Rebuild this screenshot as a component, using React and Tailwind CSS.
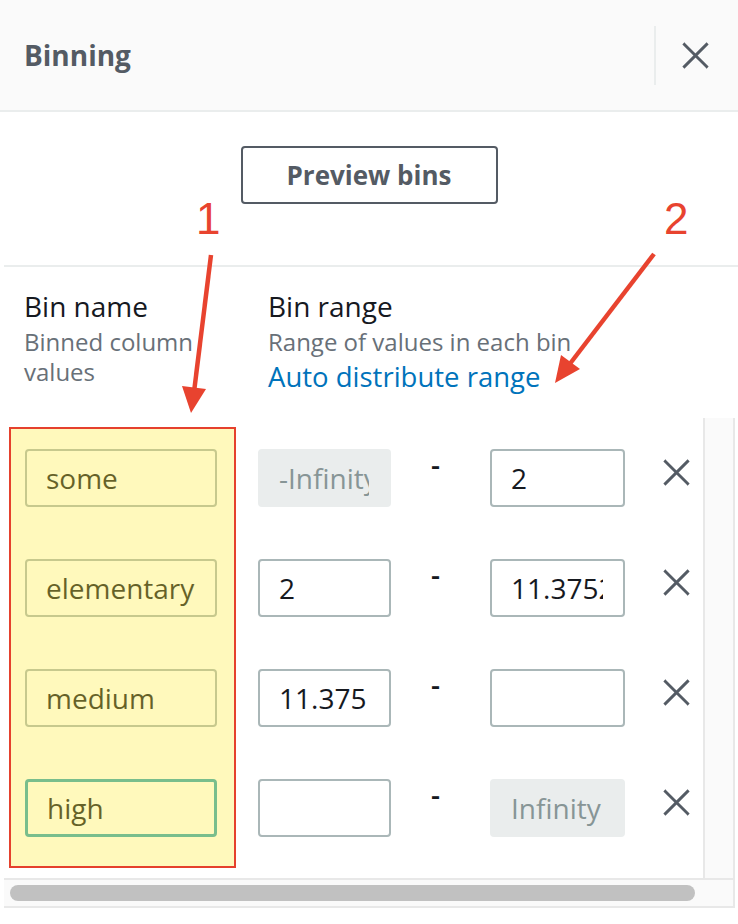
import React from "react";

const rows = [
  { name: "some", from: "-Infinity", fromLocked: true, to: "2" },
  { name: "elementary", from: "2", to: "11.3752" },
  { name: "medium", from: "11.375", to: "" },
  { name: "high", from: "", to: "Infinity", toLocked: true, focused: true },
];

function CloseIcon({ className = "" }) {
  return (
    <svg viewBox="0 0 28 28" className={className} fill="none">
      <path d="M2.5 2.5 L25.5 25.5 M25.5 2.5 L2.5 25.5" stroke="#545b64" strokeWidth="3" strokeLinecap="square" />
    </svg>
  );
}

function Field({ value, locked, focused, width }) {
  const base = "h-[58px] rounded-[4px] pl-[19px] pr-[20px] text-[28px] outline-none font-['Open_Sans',sans-serif]";
  if (locked) {
    return (
      <input
        readOnly
        value={value}
        className={`${base} ${width} border-2 border-[#eaeded] bg-[#eaeded] text-[#879596]`}
      />
    );
  }
  return (
    <input
      readOnly
      value={value}
      className={`${base} ${width} bg-white text-[#16191f] ${
        focused ? "border-[3px] border-[#35a6b6] pl-[18px]" : "border-2 border-[#aab7b8]"
      }`}
    />
  );
}

export default function App() {
  return (
    <div className="relative w-[738px] h-[924px] overflow-hidden bg-white font-['Open_Sans',sans-serif]">
      {/* Header */}
      <div className="flex items-center h-[112px] pl-[24px] pr-[29px] bg-[#fafafa] border-b-2 border-[#eaeded]">
        <h2 className="flex-1 text-[28px] font-bold text-[#545b64]">Binning</h2>
        <div className="w-[2px] h-[59px] bg-[#eaeded]" />
        <button className="ml-[26px]">
          <CloseIcon className="w-[27px] h-[27px]" />
        </button>
      </div>

      {/* Preview */}
      <div className="flex justify-center mt-[34px]">
        <button className="w-[257px] h-[58px] border-2 border-[#545b64] rounded-[4px] text-[26px] font-bold text-[#545b64]">
          Preview bins
        </button>
      </div>

      <div className="ml-1 mt-[61px] h-[2px] bg-[#eaeded]" />

      {/* Column labels */}
      <div className="flex pt-[18px] pl-[24px]">
        <div className="w-[244px]">
          <div className="text-[28px] leading-[42px] text-[#16191f]">Bin name</div>
          <div className="text-[24px] leading-[30px] text-[#687078] w-[170px]">Binned column values</div>
        </div>
        <div>
          <div className="text-[28px] leading-[42px] text-[#16191f]">Bin range</div>
          <div className="text-[24px] leading-[30px] text-[#687078]">Range of values in each bin</div>
          <a className="block text-[27.5px] leading-[40px] text-[#0073bb]">Auto distribute range</a>
        </div>
      </div>

      {/* Table with scrollbars */}
      <div className="ml-1 mt-[21px] w-[731px]">
        <div className="flex h-[460px]">
          <div className="relative flex-1 bg-white border-r-2 border-[#e8e8e8]">
            <div className="flex flex-col gap-[52px] pt-[31px] pl-[21px]">
              {rows.map((r) => (
                <div key={r.name} className="flex">
                  <Field value={r.name} focused={r.focused} width="w-[192px]" />
                  <div className="ml-[41px]">
                    <Field value={r.from} locked={r.fromLocked} width="w-[133px]" />
                  </div>
                  <span className="w-[99px] self-start mt-[1px] pl-[40px] text-[28px] leading-none font-semibold text-[#16191f]">-</span>
                  <Field value={r.to} locked={r.toLocked} width="w-[135px]" />
                  <CloseIcon className="ml-[38px] mt-[10px] w-[27px] h-[27px] self-start" />
                </div>
              ))}
            </div>

            {/* annotation 1 highlight */}
            <div className="pointer-events-none absolute left-[5px] top-[9px] w-[227px] h-[441px] border-2 border-[#e5412d] bg-[rgba(255,238,60,0.34)]" />
          </div>
          <div className="w-[30px] bg-[#fafafa] border-r-2 border-[#e8e8e8]" />
        </div>
        <div className="h-[30px] flex items-center pl-[6px] bg-[#fafafa] border-y-2 border-[#e8e8e8] border-r-2">
          <div className="w-[685px] h-[16px] rounded-full bg-[#c1c1c1]" />
        </div>
      </div>

      {/* annotation numbers and arrows */}
      <span className="absolute left-[196px] top-[197px] text-[44px] leading-none text-[#e8432f] font-['Liberation_Sans',sans-serif]">1</span>
      <span className="absolute left-[664px] top-[197px] text-[44px] leading-none text-[#e8432f] font-['Liberation_Sans',sans-serif]">2</span>
      <svg className="pointer-events-none absolute left-0 top-0" width="738" height="924">
        <line x1="211" y1="255" x2="194" y2="392" stroke="#e8432f" strokeWidth="4.5" />
        <polygon points="191,413 182,386 206,389" fill="#e8432f" />
        <line x1="654" y1="254" x2="569" y2="365" stroke="#e8432f" strokeWidth="4.5" />
        <polygon points="555,383 561,355 580,369" fill="#e8432f" />
      </svg>
    </div>
  );
}
